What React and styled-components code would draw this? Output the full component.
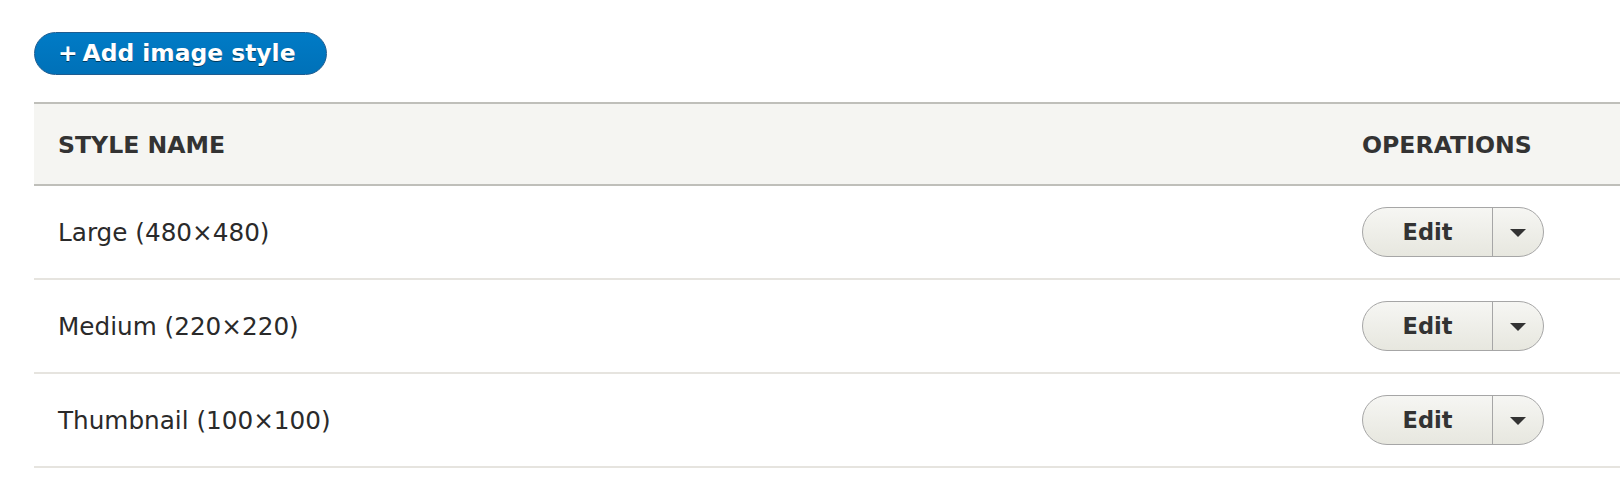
import React from "react";
import styled, { createGlobalStyle } from "styled-components";

const GlobalStyle = createGlobalStyle`
  html, body {
    margin: 0;
    padding: 0;
    background: #ffffff;
    overflow: hidden;
  }
  body {
    font-family: "DejaVu Sans", "Liberation Sans", sans-serif;
    color: #333333;
  }
`;

const Page = styled.div`
  padding: 32px 0 0 34px;
`;

const PrimaryButton = styled.a`
  display: inline-flex;
  align-items: center;
  box-sizing: border-box;
  height: 43px;
  padding: 0 30px 0 23px;
  border: 1px solid #1e5c90;
  border-radius: 999px;
  background: linear-gradient(to bottom, #007bc6, #0071b8);
  color: #ffffff;
  font-weight: bold;
  font-size: 23.4px;
  line-height: 1;
  text-decoration: none;
  text-shadow: 0 1px rgba(0, 0, 0, 0.5);
  white-space: nowrap;
  cursor: pointer;
`;

const Plus = styled.span`
  margin-right: 5px;
`;

const Table = styled.table`
  margin-top: 27px;
  width: 1586px;
  table-layout: fixed;
  border-collapse: separate;
  border-spacing: 0;
`;

const HeadCell = styled.th`
  box-sizing: border-box;
  width: ${(p) => p.$width || "auto"};
  height: 84px;
  padding: 1px 24px 0;
  background: #f5f5f2;
  border-top: 2px solid #bfbfba;
  border-bottom: 2px solid #bfbfba;
  text-align: left;
  vertical-align: middle;
  text-transform: uppercase;
  font-weight: bold;
  font-size: 23.6px;
  color: #333333;
  white-space: nowrap;
`;

const Cell = styled.td`
  box-sizing: border-box;
  height: 94px;
  padding: 0 24px;
  border-bottom: 2px solid #e6e4df;
  vertical-align: middle;
  font-size: 24.7px;
  color: #2a2a2a;
  white-space: nowrap;
`;

const DropButton = styled.div`
  display: inline-flex;
  box-sizing: border-box;
  height: 50px;
  border: 1px solid #a6a6a6;
  border-radius: 999px;
  background: linear-gradient(to bottom, #f6f6f3, #e7e7df);
  overflow: hidden;
`;

const DropAction = styled.a`
  display: flex;
  align-items: center;
  justify-content: center;
  width: 129px;
  font-weight: bold;
  font-size: 22.5px;
  color: #333333;
  text-decoration: none;
  cursor: pointer;
`;

const DropToggle = styled.button`
  display: flex;
  align-items: center;
  justify-content: center;
  width: 51px;
  padding: 0;
  margin: 0;
  border: none;
  border-left: 1px solid #a6a6a6;
  background: transparent;
  cursor: pointer;
`;

const Arrow = styled.span`
  display: block;
  width: 0;
  height: 0;
  border-left: 8px solid transparent;
  border-right: 8px solid transparent;
  border-top: 8px solid #333333;
  margin-top: 1px;
`;

const styles = [
  "Large (480×480)",
  "Medium (220×220)",
  "Thumbnail (100×100)",
];

export default function App() {
  return (
    <>
      <GlobalStyle />
      <Page>
        <PrimaryButton>
          <Plus>+</Plus>Add image style
        </PrimaryButton>
        <Table>
          <thead>
            <tr>
              <HeadCell $width="1304px">Style name</HeadCell>
              <HeadCell>Operations</HeadCell>
            </tr>
          </thead>
          <tbody>
            {styles.map((name) => (
              <tr key={name}>
                <Cell>{name}</Cell>
                <Cell>
                  <DropButton>
                    <DropAction>Edit</DropAction>
                    <DropToggle aria-label="List additional actions">
                      <Arrow />
                    </DropToggle>
                  </DropButton>
                </Cell>
              </tr>
            ))}
          </tbody>
        </Table>
      </Page>
    </>
  );
}
